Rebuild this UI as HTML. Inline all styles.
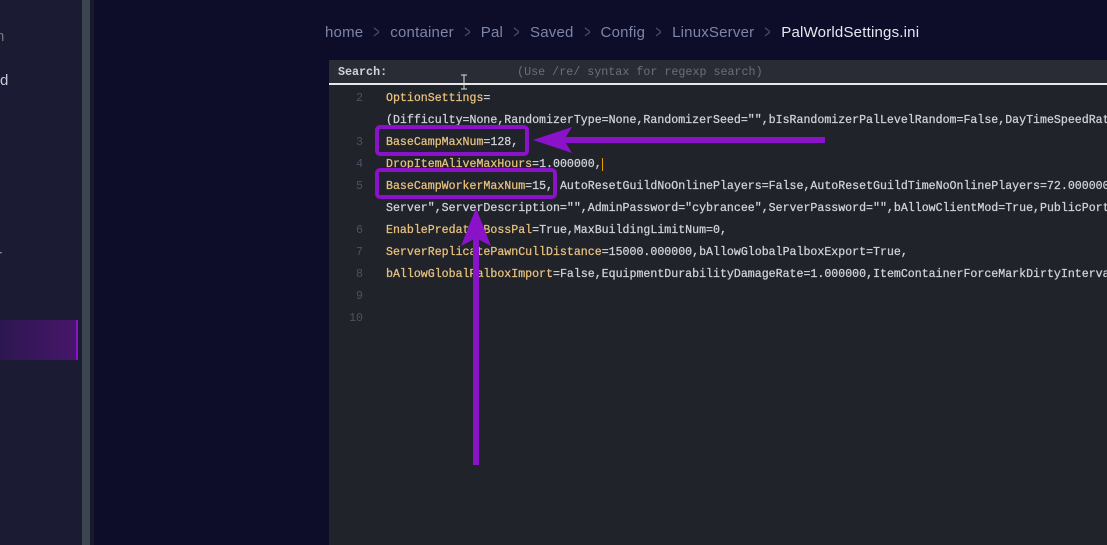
<!DOCTYPE html>
<html><head><meta charset="utf-8"><style>
*{margin:0;padding:0;box-sizing:border-box}
body{width:1107px;height:545px;overflow:hidden;background:#0d0d2a;position:relative;font-family:"Liberation Sans",sans-serif}
.side{position:absolute;left:0;top:0;width:82px;height:545px;background:#1b1b33;color:#c9cad6;font-size:15px}
.div1{position:absolute;left:82px;top:0;width:8px;height:545px;background:#3a4550}
.div2{position:absolute;left:90px;top:0;width:4px;height:545px;background:#161a2c}
.sel{position:absolute;left:0;top:320px;width:78px;height:40px;background:linear-gradient(90deg,#2d1750,#46166a);border-right:2px solid #8a12c8}
.bc{position:absolute;left:325px;top:24px;font-size:15px;color:#7d85a8;white-space:nowrap;letter-spacing:0.2px}
.bc span.s{color:#4a5070;margin:0 9px;display:inline-block;transform:scaleX(0.7) scaleY(1.25)}
.bc b{font-weight:normal;color:#e6e8f0}
.ed{position:absolute;left:329px;top:60px;right:0;bottom:0;background:#21232b;overflow:hidden}
.search{height:25px;background:#2a2c35;border-bottom:2px solid #e8e8e8;font-family:"Liberation Mono",monospace;font-size:11.7px;color:#d0d3da;padding:5px 9px;white-space:nowrap;font-weight:bold}
.search i{font-style:normal;font-weight:normal;color:#6a6f7c;margin-left:130px}
.code{position:absolute;left:0;top:28px;font-family:"Liberation Mono",monospace;font-size:11.6px;line-height:22px;white-space:pre}
.ln{position:absolute;left:0;width:34px;text-align:right;color:#4b5263}
.tx{position:absolute;left:57px;color:#d0d3da;-webkit-text-stroke:0.25px currentColor}
.k{color:#e8c27d}
.box{position:absolute;border:4px solid #8a12c8;border-radius:5px}
</style></head><body>
<div class="side">
<div style="position:absolute;left:-4px;top:28px;color:#777">n</div>
<div style="position:absolute;left:0;top:72px">d</div>
<div style="position:absolute;left:-3px;top:247px;color:#999">r</div>
<div class="sel"></div>
</div>
<div class="div1"></div><div class="div2"></div>
<div class="bc">home<span class="s">&gt;</span>container<span class="s">&gt;</span>Pal<span class="s">&gt;</span>Saved<span class="s">&gt;</span>Config<span class="s">&gt;</span>LinuxServer<span class="s">&gt;</span><b>PalWorldSettings.ini</b></div>
<div class="ed">
<div class="search">Search:<i>(Use /re/ syntax for regexp search)</i></div>
<div class="code">
<div class="ln" style="top:0">2</div><div class="tx" style="top:0"><span class="k">OptionSettings</span>=</div>
<div class="tx" style="top:22px">(Difficulty=None,RandomizerType=None,RandomizerSeed="",bIsRandomizerPalLevelRandom=False,DayTimeSpeedRate=1.000000</div>
<div class="ln" style="top:44px">3</div><div class="tx" style="top:44px"><span class="k">BaseCampMaxNum</span>=128,</div>
<div class="ln" style="top:66px">4</div><div class="tx" style="top:66px"><span class="k">DropItemAliveMaxHours</span>=1.000000,<span style="border-right:1px solid #e5a000"></span></div>
<div class="ln" style="top:88px">5</div><div class="tx" style="top:88px"><span class="k">BaseCampWorkerMaxNum</span>=15, AutoResetGuildNoOnlinePlayers=False,AutoResetGuildTimeNoOnlinePlayers=72.000000,GuildPlayer</div>
<div class="tx" style="top:110px">Server",ServerDescription="",AdminPassword="cybrancee",ServerPassword="",bAllowClientMod=True,PublicPort=1</div>
<div class="ln" style="top:132px">6</div><div class="tx" style="top:132px"><span class="k">EnablePredatorBossPal</span>=True,MaxBuildingLimitNum=0,</div>
<div class="ln" style="top:154px">7</div><div class="tx" style="top:154px"><span class="k">ServerReplicatePawnCullDistance</span>=15000.000000,bAllowGlobalPalboxExport=True,</div>
<div class="ln" style="top:176px">8</div><div class="tx" style="top:176px"><span class="k">bAllowGlobalPalboxImport</span>=False,EquipmentDurabilityDamageRate=1.000000,ItemContainerForceMarkDirtyInterval=1</div>
<div class="ln" style="top:198px">9</div>
<div class="ln" style="top:220px">10</div>
</div>
</div>
<div class="box" style="left:375px;top:125px;width:154px;height:31px"></div>
<div class="box" style="left:375px;top:168px;width:182px;height:31px"></div>
<svg style="position:absolute;left:0;top:0" width="1107" height="545">
<rect x="560" y="137" width="265" height="6" fill="#8a12c8"/>
<polygon points="533,140 572,127 564,140 572,153" fill="#8a12c8"/>
<rect x="473" y="232" width="6" height="233" fill="#8a12c8"/>
<polygon points="476,208 461,246 476,238 491,246" fill="#8a12c8"/>
<path d="M461 75h6M464 75v14M461 89h6" stroke="#ddd" stroke-width="1" fill="none"/>
</svg>
</body></html>
